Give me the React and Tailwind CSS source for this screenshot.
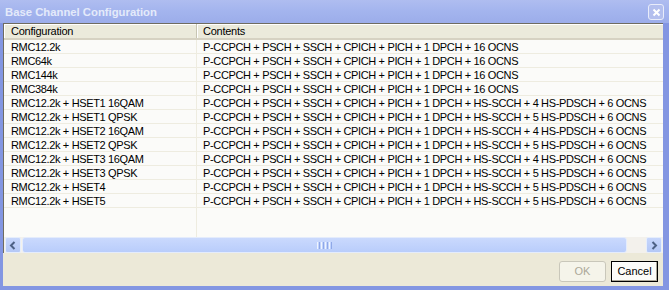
import React from "react"

const rows = [
  ["RMC12.2k", "P-CCPCH + PSCH + SSCH + CPICH + PICH + 1 DPCH + 16 OCNS"],
  ["RMC64k", "P-CCPCH + PSCH + SSCH + CPICH + PICH + 1 DPCH + 16 OCNS"],
  ["RMC144k", "P-CCPCH + PSCH + SSCH + CPICH + PICH + 1 DPCH + 16 OCNS"],
  ["RMC384k", "P-CCPCH + PSCH + SSCH + CPICH + PICH + 1 DPCH + 16 OCNS"],
  ["RMC12.2k + HSET1 16QAM", "P-CCPCH + PSCH + SSCH + CPICH + PICH + 1 DPCH + HS-SCCH + 4 HS-PDSCH + 6 OCNS"],
  ["RMC12.2k + HSET1 QPSK", "P-CCPCH + PSCH + SSCH + CPICH + PICH + 1 DPCH + HS-SCCH + 5 HS-PDSCH + 6 OCNS"],
  ["RMC12.2k + HSET2 16QAM", "P-CCPCH + PSCH + SSCH + CPICH + PICH + 1 DPCH + HS-SCCH + 4 HS-PDSCH + 6 OCNS"],
  ["RMC12.2k + HSET2 QPSK", "P-CCPCH + PSCH + SSCH + CPICH + PICH + 1 DPCH + HS-SCCH + 5 HS-PDSCH + 6 OCNS"],
  ["RMC12.2k + HSET3 16QAM", "P-CCPCH + PSCH + SSCH + CPICH + PICH + 1 DPCH + HS-SCCH + 4 HS-PDSCH + 6 OCNS"],
  ["RMC12.2k + HSET3 QPSK", "P-CCPCH + PSCH + SSCH + CPICH + PICH + 1 DPCH + HS-SCCH + 5 HS-PDSCH + 6 OCNS"],
  ["RMC12.2k + HSET4", "P-CCPCH + PSCH + SSCH + CPICH + PICH + 1 DPCH + HS-SCCH + 5 HS-PDSCH + 6 OCNS"],
  ["RMC12.2k + HSET5", "P-CCPCH + PSCH + SSCH + CPICH + PICH + 1 DPCH + HS-SCCH + 5 HS-PDSCH + 6 OCNS"],
]

function ArrowButton({ dir }) {
  return (
    <div className="w-[16px] h-[16px] shrink-0 rounded-[2px] border border-[#e6eefc] bg-gradient-to-b from-[#c6d6fc] to-[#b4c8f6] flex items-center justify-center">
      <svg width="8" height="9" viewBox="0 0 8 9">
        {dir === "left" ? (
          <path d="M5.5 1 L2 4.5 L5.5 8" stroke="#4d6185" strokeWidth="2" fill="none" />
        ) : (
          <path d="M2.5 1 L6 4.5 L2.5 8" stroke="#4d6185" strokeWidth="2" fill="none" />
        )}
      </svg>
    </div>
  )
}

export default function App() {
  return (
    <div className="w-[669px] h-[290px] bg-[#8396e2] flex flex-col font-['Liberation_Sans',sans-serif] select-none overflow-hidden">
      {/* title bar */}
      <div className="h-[23px] shrink-0 bg-gradient-to-b from-[#afbdf0] via-[#a3b4ee] to-[#9cadea] flex items-center pl-[5px] pr-[5px]">
        <span className="text-[11.3px] font-bold text-[#e4eafa] mt-[1px]">Base Channel Configuration</span>
        <div className="ml-auto w-[16px] h-[16px] rounded-[3px] border border-[#e8ecfa] bg-[#b3bfee] flex items-center justify-center mt-[1px]">
          <svg width="9" height="9" viewBox="0 0 9 9">
            <path d="M1.5 1.5 L7.5 7.5 M7.5 1.5 L1.5 7.5" stroke="#ffffff" strokeWidth="2" />
          </svg>
        </div>
      </div>

      {/* client */}
      <div className="flex-1 ml-[3px] mr-[6px] mb-[4px] bg-[#ece9d8] flex flex-col">
        {/* list view */}
        <div className="h-[230px] border-t border-l border-[#6f6c60] bg-[#fbfbf9] flex flex-col">
          <div className="flex-1 flex flex-col overflow-hidden">
            {/* header */}
            <div className="h-[16px] shrink-0 flex bg-[#ebeadb] border-b-2 border-[#d6d2c2] text-[11px] tracking-[-0.25px] text-black">
              <div className="w-[193px] shrink-0 pl-[7px] flex items-center border-r border-[#c7c5b2] shadow-[inset_1px_1px_0_#ffffff]">
                Configuration
              </div>
              <div className="flex-1 pl-[6px] flex items-center shadow-[inset_1px_1px_0_#ffffff]">Contents</div>
            </div>
            {/* rows */}
            {rows.map(([a, b], i) => (
              <div key={i} className="h-[14px] shrink-0 flex border-b border-[#eeece0] text-[11px] tracking-[-0.35px] text-black leading-[14px]">
                <div className="w-[193px] shrink-0 pl-[7px] border-r border-[#eeece0] whitespace-nowrap overflow-hidden">{a}</div>
                <div className="flex-1 pl-[6px] whitespace-nowrap overflow-hidden">{b}</div>
              </div>
            ))}
            <div className="flex-1 flex">
              <div className="w-[193px] shrink-0 border-r border-[#eeece0]" />
            </div>
          </div>
          {/* horizontal scrollbar */}
          <div className="h-[16px] shrink-0 bg-[#f3f1ec] flex items-center pl-[1px] pr-[1px] gap-[1px]">
            <ArrowButton dir="left" />
            <div className="flex-1 h-[16px] flex pr-[18px]">
              <div className="flex-1 rounded-[3px] border border-[#e4ecfc] bg-gradient-to-b from-[#cad9fd] to-[#b9cdfb] flex items-center justify-center">
                <div className="flex gap-[1px]">
                  <div className="w-[1px] h-[7px] bg-[#eef4fe]" />
                  <div className="w-[1px] h-[7px] bg-[#8fa8e8]" />
                  <div className="w-[1px] h-[7px] bg-[#eef4fe]" />
                  <div className="w-[1px] h-[7px] bg-[#8fa8e8]" />
                  <div className="w-[1px] h-[7px] bg-[#eef4fe]" />
                  <div className="w-[1px] h-[7px] bg-[#8fa8e8]" />
                  <div className="w-[1px] h-[7px] bg-[#eef4fe]" />
                  <div className="w-[1px] h-[7px] bg-[#8fa8e8]" />
                </div>
              </div>
            </div>
            <ArrowButton dir="right" />
          </div>
        </div>

        {/* buttons */}
        <div className="flex-1 flex items-start justify-end gap-[5px] pt-[8px] pr-[5px]">
          <button className="w-[47px] h-[21px] rounded-[3px] border border-[#c9c7ba] bg-[#f5f4ea] text-[11px] text-[#aca899] flex items-center justify-center">
            OK
          </button>
          <button className="w-[47px] h-[21px] border border-black bg-[#fcfcf9] text-[11px] text-black flex items-center justify-center shadow-[inset_-1px_-1px_0_#aca899,inset_1px_1px_0_#ffffff]">
            Cancel
          </button>
        </div>
      </div>
    </div>
  )
}
